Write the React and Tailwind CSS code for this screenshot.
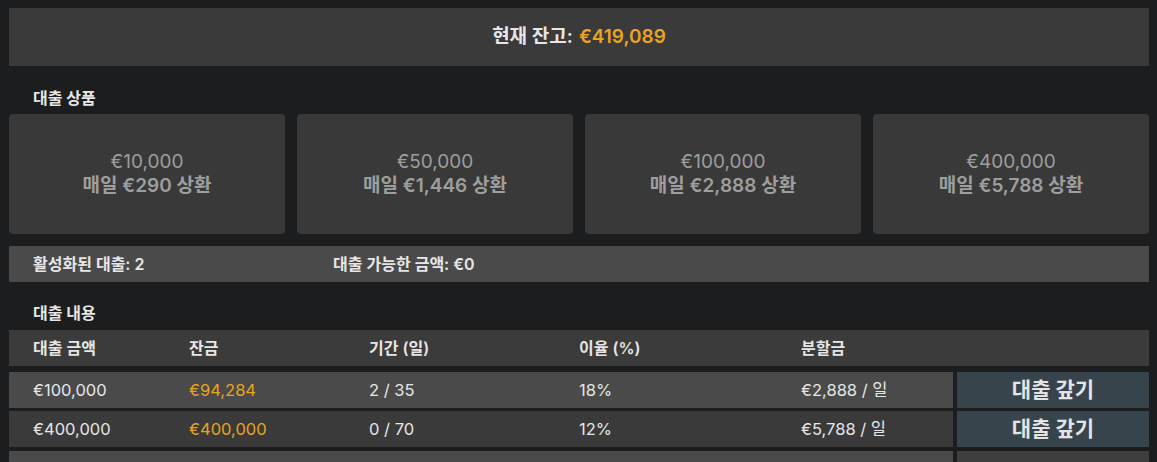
import React from "react";

const font = { fontFamily: "'Inter', 'Noto Sans CJK KR', sans-serif" };

const products = [
  ["€10,000", "매일 €290 상환"],
  ["€50,000", "매일 €1,446 상환"],
  ["€100,000", "매일 €2,888 상환"],
  ["€400,000", "매일 €5,788 상환"],
];

const loans = [
  ["€100,000", "€94,284", "2 / 35", "18%", "€2,888 / 일"],
  ["€400,000", "€400,000", "0 / 70", "12%", "€5,788 / 일"],
];

function Cols({ cells, className, head }) {
  return (
    <div className={`flex items-center h-full ${className || ""}`}>
      <div className="w-[180px] pl-6 shrink-0">{cells[0]}</div>
      <div className={`w-[180px] shrink-0 ${head ? "" : "text-[#e8a420]"}`}>{cells[1]}</div>
      <div className="w-[210px] shrink-0">{cells[2]}</div>
      <div className="w-[222px] shrink-0">{cells[3]}</div>
      <div className="flex-1">{cells[4]}</div>
    </div>
  );
}

export default function App() {
  return (
    <div style={font} className="w-[1157px] h-[462px] overflow-hidden bg-[#1c1d1f] text-[#e6e6e6]">
      <div className="pl-[9px] pt-[8px] w-[1149px]">
        <div className="h-[58px] bg-[#3a3a3a] flex items-center justify-center text-[19px] font-semibold">
          <span>현재 잔고:</span>
          <span className="text-[#e8a420] ml-[6px]">€419,089</span>
        </div>

        <div className="pt-[22px] pb-[6px] pl-6 h-[48px] text-[16px] leading-[20px] font-bold">대출 상품</div>

        <div className="grid grid-cols-4 gap-3">
          {products.map((p, i) => (
            <div key={i} className="h-[120px] rounded-[4px] bg-[#393939] flex flex-col items-center justify-center text-[#9e9e9e] text-[19px] leading-[24px]">
              <div>{p[0]}</div>
              <div className="font-semibold">{p[1]}</div>
            </div>
          ))}
        </div>

        <div className="mt-3 h-9 bg-[#4a4a4a] flex items-center pl-6 text-[16px] font-semibold">
          <span className="w-[300px]">활성화된 대출: 2</span>
          <span>대출 가능한 금액: €0</span>
        </div>

        <div className="pt-[21px] pb-[7px] pl-6 h-[48px] text-[16px] leading-[20px] font-bold">대출 내용</div>

        <div className="h-9 bg-[#3b3b3b] text-[16px] font-semibold">
          <Cols head cells={["대출 금액", "잔금", "기간 (일)", "이율 (%)", "분할금"]} />
        </div>

        <div className="mt-[6px] flex flex-col gap-[3px]">
          {loans.map((l, i) => (
            <div key={i} className="flex h-9 gap-1">
              <div className={`w-[944px] text-[16.5px] ${i % 2 === 0 ? "bg-[#4a4a4a]" : "bg-[#3a3a3a]"}`}>
                <Cols cells={l} />
              </div>
              <button className="flex-1 bg-[#38444c] text-[21px] font-bold text-[#e4e4e4] flex items-center justify-center">
                대출 갚기
              </button>
            </div>
          ))}
          <div className="flex h-9 gap-1 mt-[1px]">
            <div className="w-[944px] bg-[#4a4a4a]"></div>
            <div className="flex-1 bg-[#3e3e3e]"></div>
          </div>
        </div>
      </div>
    </div>
  );
}
